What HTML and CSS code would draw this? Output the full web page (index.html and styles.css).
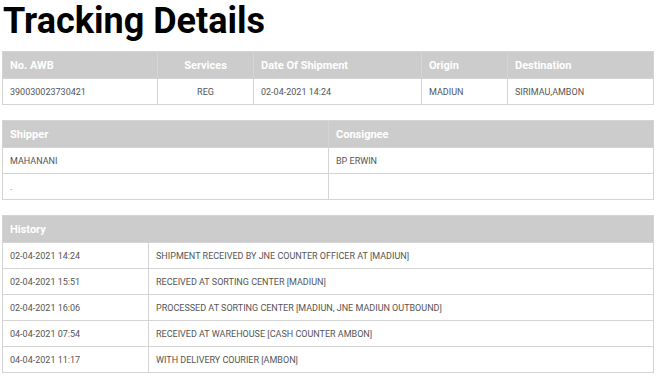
FILE: index.html
```html
<!DOCTYPE html>
<html>
<head>
<meta charset="utf-8">
<link rel="stylesheet" href="styles.css">
</head>
<body>
<h1 class="title">Tracking Details</h1>
<table class="grid">
  <colgroup><col style="width:155px"><col style="width:96px"><col style="width:168px"><col style="width:86px"><col></colgroup>
  <tr class="head"><th>No. AWB</th><th class="center">Services</th><th>Date Of Shipment</th><th>Origin</th><th>Destination</th></tr>
  <tr><td>390030023730421</td><td class="center">REG</td><td>02-04-2021 14:24</td><td>MADIUN</td><td>SIRIMAU,AMBON</td></tr>
</table>
<table class="grid">
  <colgroup><col style="width:326px"><col></colgroup>
  <tr class="head"><th>Shipper</th><th>Consignee</th></tr>
  <tr><td>MAHANANI</td><td>BP ERWIN</td></tr>
  <tr><td>.</td><td></td></tr>
</table>
<table class="grid">
  <colgroup><col style="width:146px"><col></colgroup>
  <tr class="head"><th colspan="2">History</th></tr>
  <tr><td>02-04-2021 14:24</td><td>SHIPMENT RECEIVED BY JNE COUNTER OFFICER AT [MADIUN]</td></tr>
  <tr><td>02-04-2021 15:51</td><td>RECEIVED AT SORTING CENTER [MADIUN]</td></tr>
  <tr><td>02-04-2021 16:06</td><td>PROCESSED AT SORTING CENTER [MADIUN, JNE MADIUN OUTBOUND]</td></tr>
  <tr><td>04-04-2021 07:54</td><td>RECEIVED AT WAREHOUSE [CASH COUNTER AMBON]</td></tr>
  <tr><td>04-04-2021 11:17</td><td>WITH DELIVERY COURIER [AMBON]</td></tr>
</table>
</body>
</html>
```
FILE: styles.css
```css
html, body { margin: 0; padding: 0; background: #fff; }
body { padding: 0 3px 0 2px; font-family: Roboto, "Liberation Sans", sans-serif; }
.title {
  margin: 0 0 9px 1px;
  font-size: 36px;
  line-height: 42px;
  font-weight: 700;
  color: #000;
}
.grid {
  width: 100%;
  border-collapse: collapse;
  table-layout: fixed;
  margin-bottom: 15px;
  border: 1px solid #d4d4d4;
  font-size: 9px;
}
.grid th {
  background: #cccccc;
  color: #fff;
  font-weight: 700;
  text-align: left;
  height: 26px;
  padding: 0 7px;
  border: 1px solid #d4d4d4;
  font-size: 11px;
}
.grid td {
  color: #555;
  height: 25px;
  padding: 0 7px;
  border: 1px solid #d4d4d4;
}
.grid .center { text-align: center; }
```
